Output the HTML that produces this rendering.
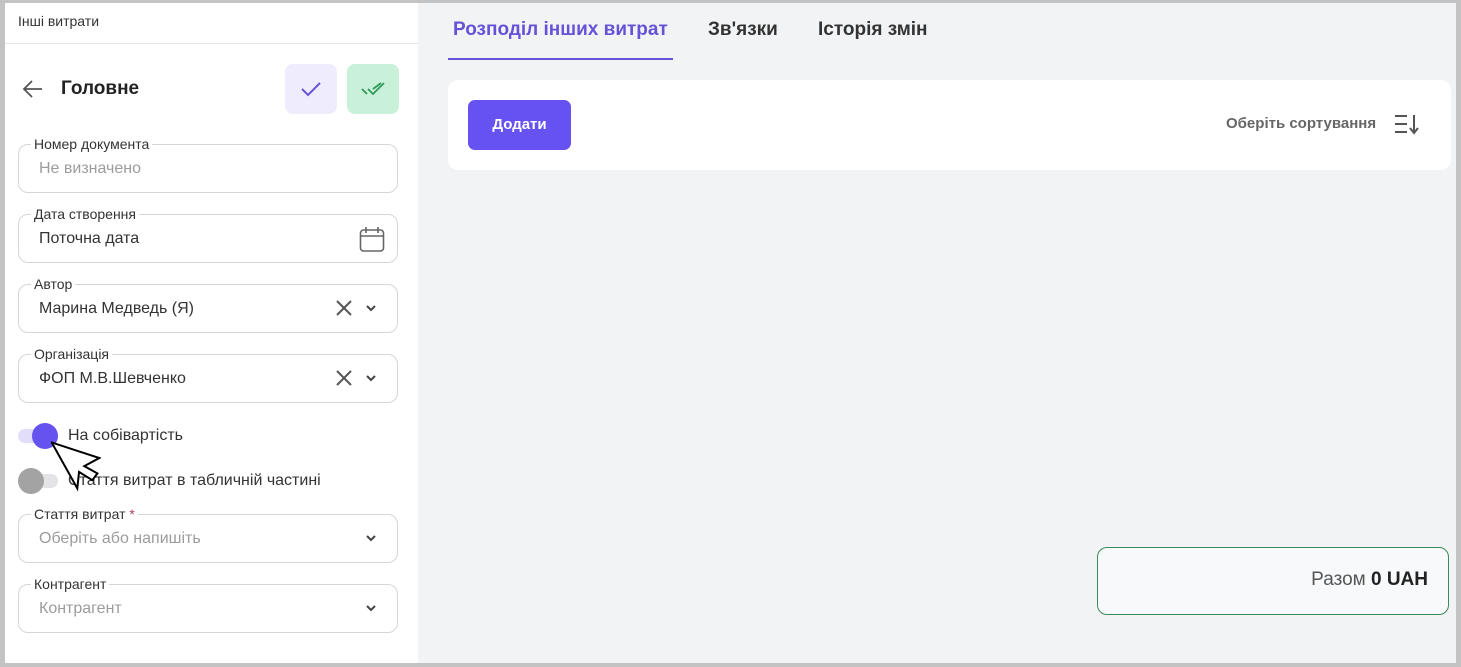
<!DOCTYPE html>
<html><head><meta charset="utf-8"><style>
*{box-sizing:border-box;margin:0;padding:0}
body{width:1461px;height:667px;background:#c3c3c3;font-family:"Liberation Sans",sans-serif;position:relative;overflow:hidden}
.left{position:absolute;left:5px;top:3px;width:413px;height:660px;background:#fff}
.right{position:absolute;left:418px;top:3px;width:1038px;height:660px;background:#f2f3f5}
.a{position:absolute}
.field{position:absolute;left:13px;width:380px;height:49px;border:1px solid #d6d6da;border-radius:10px}
.lbl{position:absolute;left:12px;top:-9px;background:#fff;padding:0 3px;font-size:14px;color:#333;line-height:16px}
.val{position:absolute;left:20px;top:15px;font-size:16px;color:#333}
.ph{color:#9c9c9c}
.chev{position:absolute;right:20px;top:19px}
.x{position:absolute;right:44px;top:14px}
</style></head><body>
<div class="left">
 <div class="a" style="left:13px;top:10px;font-size:14px;color:#333">Інші витрати</div>
 <div class="a" style="left:0;top:40px;width:413px;height:1px;background:#e6e6e8"></div>
 <svg class="a" style="left:17px;top:76px" width="22" height="20" viewBox="0 0 22 20"><path d="M20 10H3M10 2L2 10l8 8" fill="none" stroke="#555" stroke-width="1.8"/></svg>
 <div class="a" style="left:56px;top:75px;font-size:19px;font-weight:bold;color:#222">Головне</div>
 <div class="a" style="left:280px;top:61px;width:52px;height:50px;background:#efedfd;border-radius:8px"></div>
 <svg class="a" style="left:295px;top:78px" width="22" height="16"><path d="M2 8l6 6L20 2" fill="none" stroke="#6a52d9" stroke-width="2"/></svg>
 <div class="a" style="left:342px;top:61px;width:52px;height:50px;background:#c9f0d8;border-radius:8px"></div>
 <svg class="a" style="left:355px;top:78px" width="28" height="16"><path d="M2 8l5 5M8 8l5 5L24 2M13 8l8-6" fill="none" stroke="#2f9a5a" stroke-width="1.8"/></svg>

 <div class="field" style="top:141px"><div class="lbl">Номер документа</div><div class="val ph">Не визначено</div></div>
 <div class="field" style="top:211px"><div class="lbl">Дата створення</div><div class="val">Поточна дата</div>
  <svg class="a" style="right:12px;top:11px" width="26" height="27" viewBox="0 0 26 27"><rect x="1.5" y="4" width="23" height="21" rx="3" fill="none" stroke="#666" stroke-width="1.6"/><path d="M1.5 10h23M7 1v6M19 1v6" stroke="#666" stroke-width="1.6"/></svg></div>
 <div class="field" style="top:281px"><div class="lbl">Автор</div><div class="val">Марина Медведь (Я)</div>
  <svg class="x" width="18" height="18"><path d="M2 2l14 14M16 2L2 16" stroke="#555" stroke-width="2"/></svg>
  <svg class="chev" width="12" height="8"><path d="M2 2l4 4 4-4" fill="none" stroke="#444" stroke-width="2"/></svg></div>
 <div class="field" style="top:351px"><div class="lbl">Організація</div><div class="val">ФОП М.В.Шевченко</div>
  <svg class="x" width="18" height="18"><path d="M2 2l14 14M16 2L2 16" stroke="#555" stroke-width="2"/></svg>
  <svg class="chev" width="12" height="8"><path d="M2 2l4 4 4-4" fill="none" stroke="#444" stroke-width="2"/></svg></div>

 <div class="a" style="left:13px;top:426px;width:40px;height:14px;border-radius:7px;background:#e2defa"></div>
 <div class="a" style="left:27px;top:420px;width:26px;height:26px;border-radius:50%;background:#6552ef"></div>
 <div class="a" style="left:63px;top:424px;font-size:16px;color:#333">На собівартість</div>
 <div class="a" style="left:13px;top:471px;width:40px;height:14px;border-radius:7px;background:#e4e4e6"></div>
 <div class="a" style="left:13px;top:465px;width:26px;height:26px;border-radius:50%;background:#a3a3a3"></div>
 <div class="a" style="left:63px;top:469px;font-size:16px;color:#333">Стаття витрат в табличній частині</div>
 <svg class="a" style="left:46px;top:434px" width="50" height="56" viewBox="0 0 50 56"><path d="M4 3L23 52l4-16 12 10 6-6-12-9 16-6z" fill="#fff" stroke="#000" stroke-width="2" transform="rotate(-8 20 28)"/></svg>

 <div class="field" style="top:511px"><div class="lbl">Стаття витрат <span style="color:#b04060">*</span></div><div class="val ph">Оберіть або напишіть</div>
  <svg class="chev" width="12" height="8"><path d="M2 2l4 4 4-4" fill="none" stroke="#444" stroke-width="2"/></svg></div>
 <div class="field" style="top:581px"><div class="lbl">Контрагент</div><div class="val ph">Контрагент</div>
  <svg class="chev" width="12" height="8"><path d="M2 2l4 4 4-4" fill="none" stroke="#444" stroke-width="2"/></svg></div>
</div>

<div class="right">
 <div class="a" style="left:35px;top:16px;font-size:19px;font-weight:bold;color:#6652d6">Розподіл інших витрат</div>
 <div class="a" style="left:30px;top:55px;width:225px;height:2px;background:#6652d6"></div>
 <div class="a" style="left:290px;top:16px;font-size:19px;font-weight:bold;color:#333">Зв'язки</div>
 <div class="a" style="left:400px;top:16px;font-size:19px;font-weight:bold;color:#333">Історія змін</div>
 <div class="a" style="left:30px;top:77px;width:1003px;height:90px;background:#fff;border-radius:10px"></div>
 <div class="a" style="left:50px;top:97px;width:103px;height:50px;background:#6652f0;border-radius:7px;color:#fff;font-size:15px;font-weight:bold;text-align:center;line-height:50px">Додати</div>
 <div class="a" style="left:808px;top:112px;font-size:15px;font-weight:bold;color:#666">Оберіть сортування</div>
 <svg class="a" style="left:975px;top:110px" width="28" height="24"><path d="M2 3h12M2 11h12M2 19h12" stroke="#555" stroke-width="2"/><path d="M21 2v18M17 15l4 5 4-5" fill="none" stroke="#555" stroke-width="2"/></svg>
 <div class="a" style="left:679px;top:544px;width:352px;height:68px;border:1px solid #3b8a5a;border-radius:10px;background:#f8f9fa"></div>
 <div class="a" style="left:679px;top:566px;width:331px;text-align:right;font-size:19px;color:#555">Разом <b style="color:#222">0 UAH</b></div>
</div>
</body></html>
